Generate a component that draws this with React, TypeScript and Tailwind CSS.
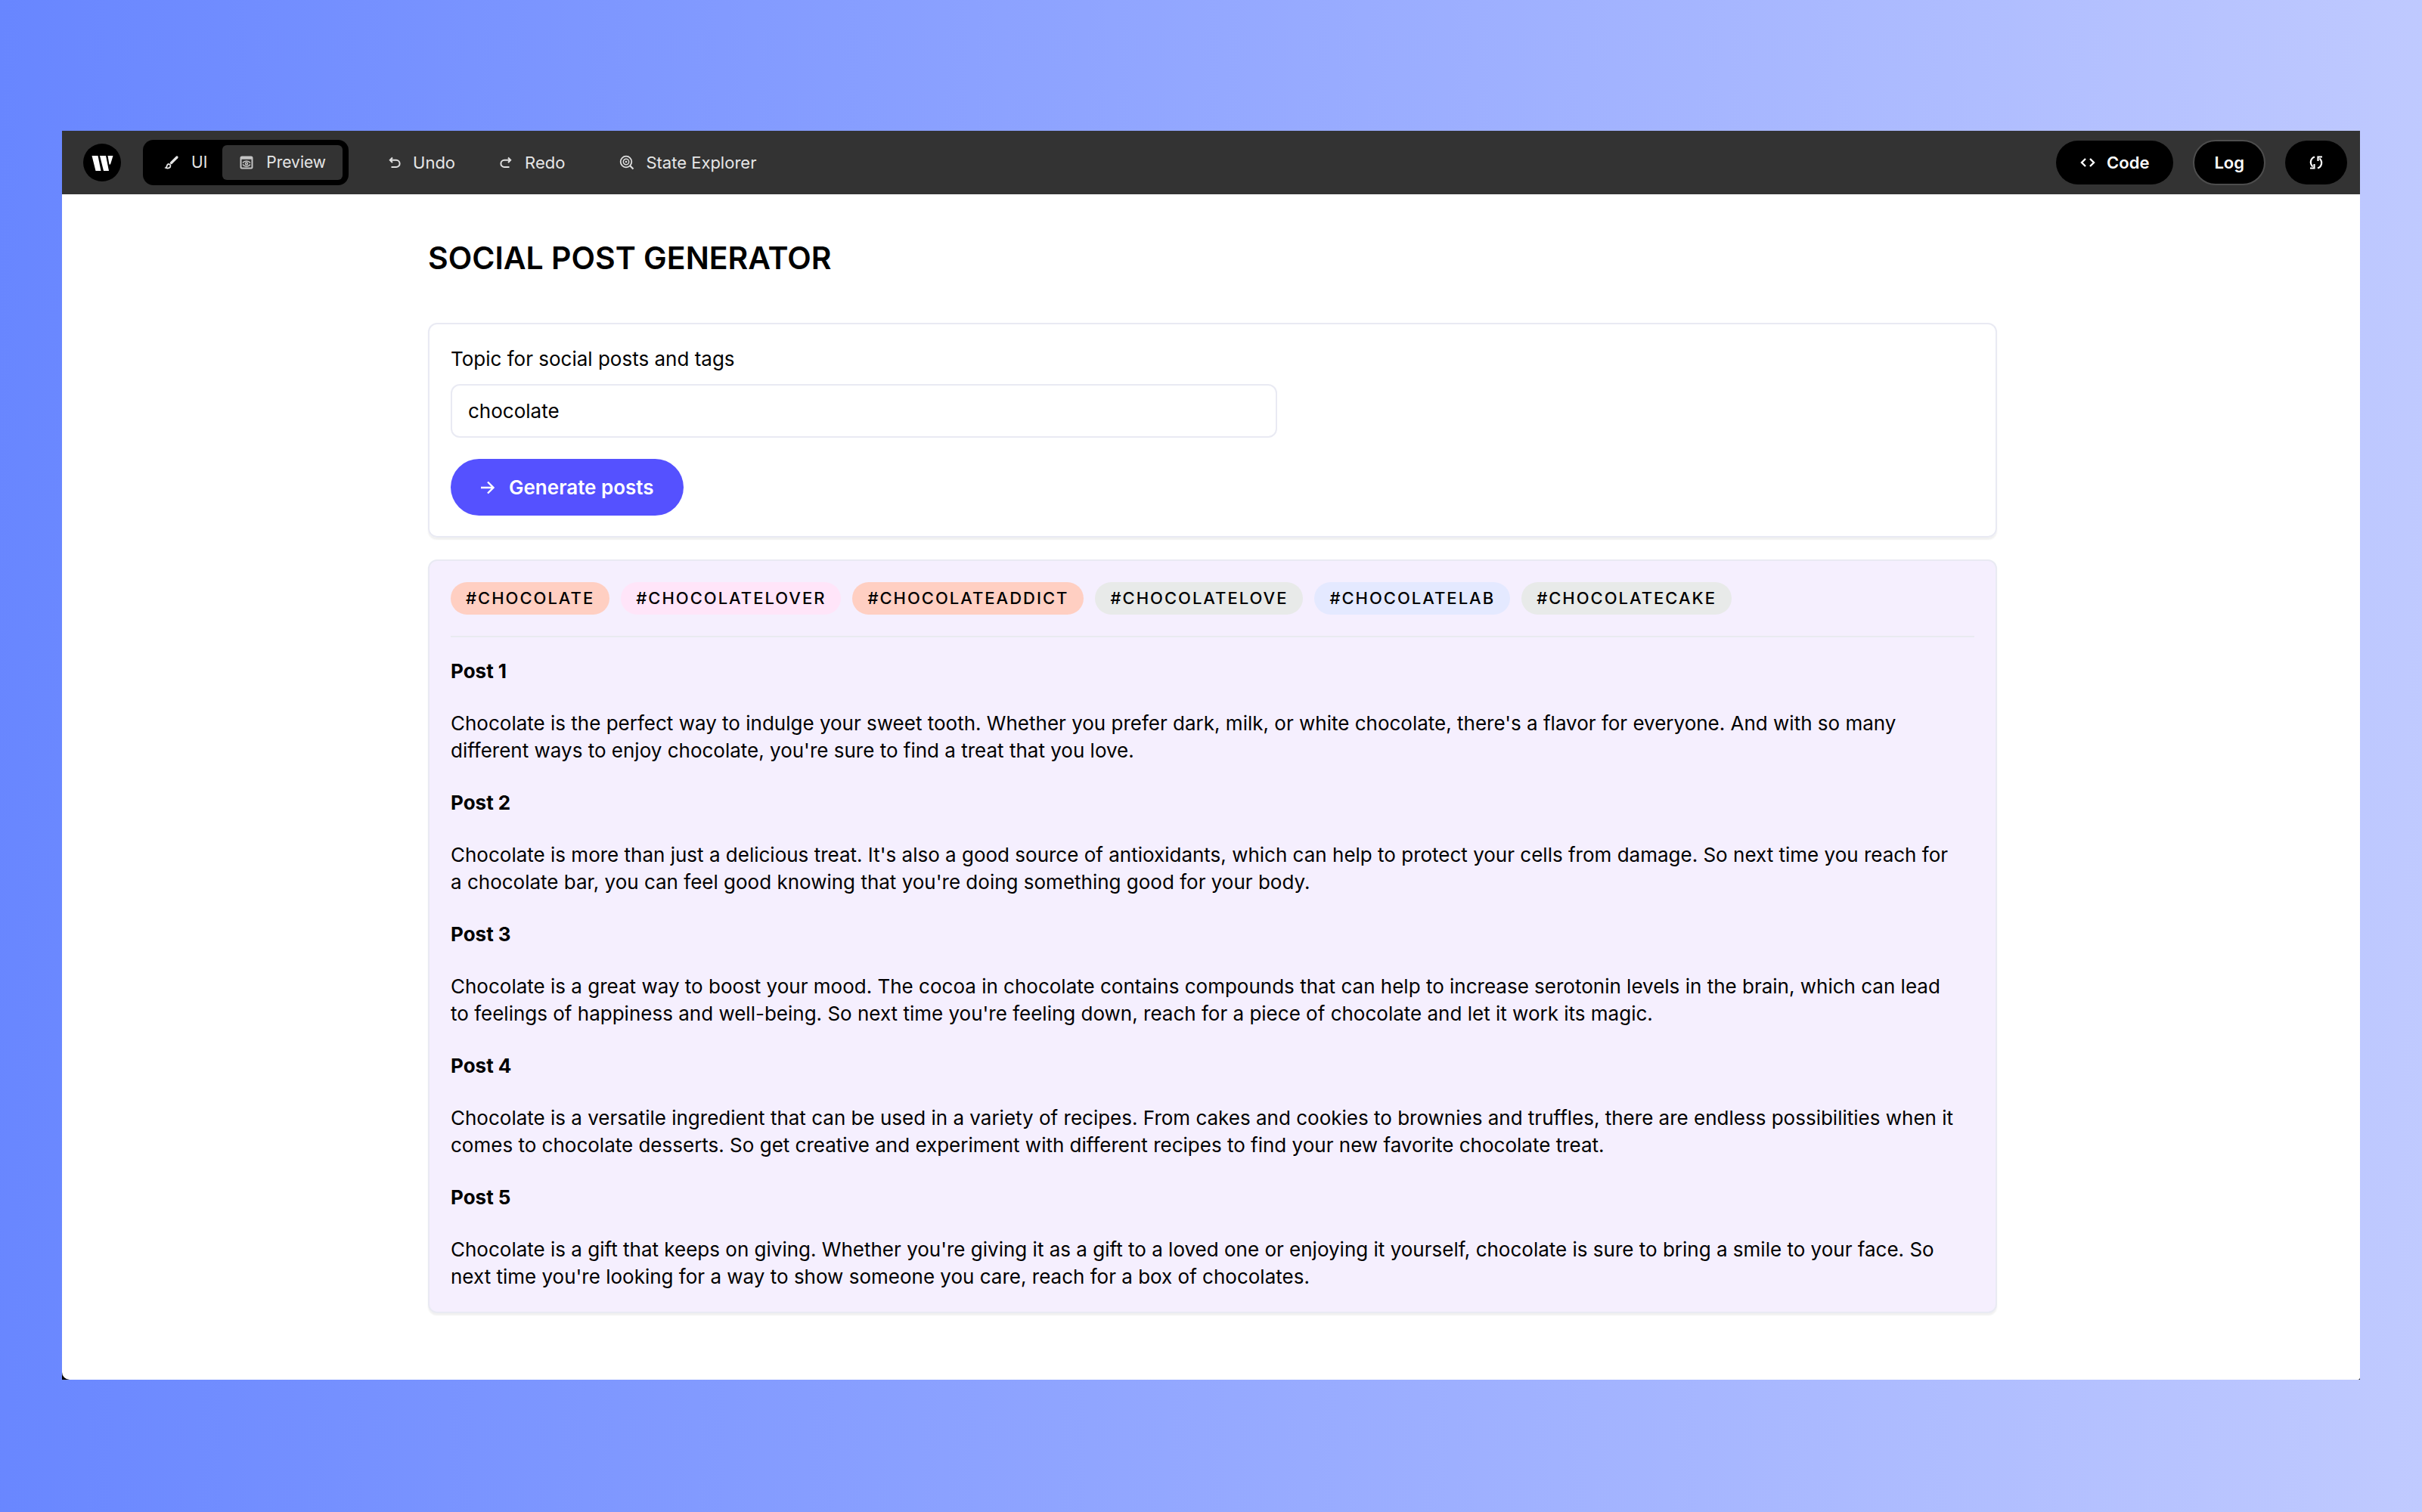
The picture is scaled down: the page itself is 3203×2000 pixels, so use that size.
import React from "react";

const tags = [
  { label: "#CHOCOLATE", tone: "bg-[#ffcfc2]" },
  { label: "#CHOCOLATELOVER", tone: "bg-[#ffe5f9]" },
  { label: "#CHOCOLATEADDICT", tone: "bg-[#ffcfc2]" },
  { label: "#CHOCOLATELOVE", tone: "bg-[#e8eae9]" },
  { label: "#CHOCOLATELAB", tone: "bg-[#e4e9ff]" },
  { label: "#CHOCOLATECAKE", tone: "bg-[#e8eae9]" },
];

const posts = [
  "Chocolate is the perfect way to indulge your sweet tooth. Whether you prefer dark, milk, or white chocolate, there's a flavor for everyone. And with so many different ways to enjoy chocolate, you're sure to find a treat that you love.",
  "Chocolate is more than just a delicious treat. It's also a good source of antioxidants, which can help to protect your cells from damage. So next time you reach for a\u00a0chocolate bar, you can feel good knowing that you're doing something good for your body.",
  "Chocolate is a great way to boost your mood. The cocoa in chocolate contains compounds that can help to increase serotonin levels in the brain, which can lead to\u00a0feelings of happiness and well-being. So next time you're feeling down, reach for a piece of chocolate and let it work its magic.",
  "Chocolate is a versatile ingredient that can be used in a variety of recipes. From cakes and cookies to brownies and truffles, there are endless possibilities when it comes to chocolate desserts. So get creative and experiment with different recipes to find your new favorite chocolate treat.",
  "Chocolate is a gift that keeps on giving. Whether you're giving it as a gift to a loved one or enjoying it yourself, chocolate is sure to bring a smile to your face. So next time you're looking for a way to show someone you care, reach for a box of chocolates.",
];

function Logo() {
  return (
    <svg viewBox="0 0 50 50" className="size-[50px] shrink-0" role="img" aria-label="Writer">
      <circle cx="25" cy="25" r="25" fill="#000" />
      <path d="M11.500 16h8l4 20h-7z" fill="#fff" />
      <path d="M22 16h8l4 20h-7z" fill="#fff" />
      <path d="M32.500 16h7l-3.500 11.500h-1.500z" fill="#fff" />
    </svg>
  );
}

function BrushIcon() {
  return (
    <svg viewBox="0 0 20 20" className="size-5" fill="none" stroke="#e6e6e6" strokeLinecap="round">
      <path d="M9.500 10.500L17 3" strokeWidth="3.200" />
      <path d="M8.500 14a2.300 2.300 0 0 0-4.300-.8c-.4.900-.3 2.600-2 3.700 2.800 1.300 6.300.5 6.300-2.900z" strokeWidth="1.800" />
    </svg>
  );
}

function PreviewIcon() {
  return (
    <svg viewBox="0 0 20 20" className="size-5" fill="none" stroke="#c4c4c4">
      <rect x="2.500" y="2.500" width="15" height="15" rx="1.500" strokeWidth="2" />
      <path d="M2 4h16" strokeWidth="3.500" />
      <path d="M5 10.500c2.500-3.500 7.500-3.500 10 0" strokeWidth="1.500" />
      <path d="M5 12.500c2.500 3.500 7.500 3.500 10 0" strokeWidth="1.500" />
      <circle cx="10" cy="11.500" r="1.500" strokeWidth="1.500" />
    </svg>
  );
}

function UndoIcon({ flip = false }: { flip?: boolean }) {
  return (
    <svg viewBox="0 0 18 18" className={flip ? "size-[18px] -scale-x-100" : "size-[18px]"} fill="none" stroke="#e0e0e0" strokeWidth="2">
      <path d="M6 2.500L2.800 5.800 6 9M2.800 5.800h8.200a4.600 4.600 0 0 1 0 9.200H4.500" />
    </svg>
  );
}

function ExploreIcon() {
  return (
    <svg viewBox="0 0 20 20" className="size-5" fill="none" stroke="#dddddd" strokeWidth="1.800">
      <circle cx="9" cy="9" r="7.300" />
      <circle cx="9" cy="9" r="3.700" strokeWidth="1.500" />
      <circle cx="9" cy="9" r="1.300" fill="#dddddd" stroke="none" />
      <path d="M14 14l4.500 4.500" strokeWidth="2.200" />
    </svg>
  );
}

function CodeIcon() {
  return (
    <svg viewBox="0 0 20 20" className="size-5" fill="none" stroke="#fff" strokeWidth="2.400">
      <path d="M7 5l-5 5 5 5M13 5l5 5-5 5" />
    </svg>
  );
}

function SyncIcon() {
  return (
    <svg viewBox="0 0 20 20" className="size-5" fill="none" stroke="#fff" strokeWidth="2.200">
      <path d="M8 2.500C2.500 4.500 1 11 5.500 15.500" />
      <path d="M2 17.500h5.500V12" />
      <path d="M12 17.500c5.500-2 7-8.500 2.500-13" />
      <path d="M18 2.500h-5.500V8" />
    </svg>
  );
}

function ArrowIcon() {
  return (
    <svg viewBox="0 0 20 20" className="size-5" fill="none" stroke="#fff" strokeWidth="2.400">
      <path d="M1 10h16.500M10 2.500l7.500 7.500-7.500 7.500" />
    </svg>
  );
}

const panel = "rounded-[12px] border-2 border-[#e9eaf3] px-7 shadow-[0_3px_2px_rgba(0,0,0,0.06)]";

export default function App() {
  return (
    <div className="min-h-screen bg-linear-[91deg,#6886ff,#c0caff] px-[82px] pt-[173px] pb-[175px] font-['Inter','Liberation_Sans',sans-serif] text-black">
      <div className="bg-black">
        <header className="flex h-[84px] items-center bg-[#333333] pr-[17px] pl-7 text-[22px] text-[#e6e6e6]">
          <Logo />
          <div className="ml-[29px] flex h-[60px] items-center rounded-[14px] bg-black p-2 text-[21px]">
            <button type="button" className="flex items-center gap-4 px-5">
              <BrushIcon />
              UI
            </button>
            <button type="button" aria-pressed="true" className="flex h-[46px] items-center gap-4 rounded-md bg-[#333333] px-[22px]">
              <PreviewIcon />
              Preview
            </button>
          </div>
          <button type="button" className="ml-[52px] flex items-center gap-[15px]">
            <UndoIcon />
            Undo
          </button>
          <button type="button" className="ml-[58px] flex items-center gap-4">
            <UndoIcon flip />
            Redo
          </button>
          <button type="button" className="ml-[72px] flex items-center gap-[15px]">
            <ExploreIcon />
            State Explorer
          </button>
          <div className="ml-auto flex items-center gap-[26px] font-semibold text-white">
            <button type="button" className="flex h-[58px] items-center gap-[15px] rounded-full bg-black px-8">
              <CodeIcon />
              Code
            </button>
            <button type="button" className="h-[60px] rounded-full border-2 border-[#4d4d4d] bg-black px-[26px]">
              Log
            </button>
            <button type="button" aria-label="Refresh" className="flex h-[58px] items-center rounded-full bg-black px-[31px]">
              <SyncIcon />
            </button>
          </div>
        </header>

        <main className="rounded-bl-[10px] rounded-br-[3px] bg-white pt-[57px] pr-12 pb-[88px] pl-[52px]">
          <div className="mx-auto max-w-[2075px]">
            <h1 className="text-[41px] leading-[54px] font-semibold">SOCIAL POST GENERATOR</h1>

            <form className={`mt-[59px] pt-7 pb-[27px] ${panel}`} onSubmit={(e) => e.preventDefault()}>
              <label htmlFor="topic" className="block text-[26px] leading-9">
                Topic for social posts and tags
              </label>
              <input
                id="topic"
                type="text"
                defaultValue="chocolate"
                className="mt-[15px] block h-[71px] w-full max-w-[1093px] rounded-[12px] border-2 border-[#e9eaf3] px-[21px] text-[26px]"
              />
              <button type="submit" className="mt-7 flex h-[75px] items-center gap-[18px] rounded-full bg-[#5551ff] px-[39px] text-[26px] font-semibold text-white">
                <ArrowIcon />
                Generate posts
              </button>
            </form>

            <section className={`mt-[29px] bg-[#f5effe] pt-7 pb-7 ${panel}`}>
              <ul className="flex flex-wrap gap-[15px]">
                {tags.map((tag) => (
                  <li key={tag.label} className={`h-[43px] rounded-full px-5 text-[22px] leading-[43px] font-medium tracking-[2px] ${tag.tone}`}>
                    {tag.label}
                  </li>
                ))}
              </ul>
              <hr className="mt-7 mb-[27px] border-t-2 border-[#e9eaf0]" />
              <div className="flex flex-col gap-[33px] text-[26px] leading-9">
                {posts.map((post, i) => (
                  <article key={i}>
                    <h2 className="mb-[33px] font-bold">Post {i + 1}</h2>
                    <p>{post}</p>
                  </article>
                ))}
              </div>
            </section>
          </div>
        </main>
      </div>
    </div>
  );
}
